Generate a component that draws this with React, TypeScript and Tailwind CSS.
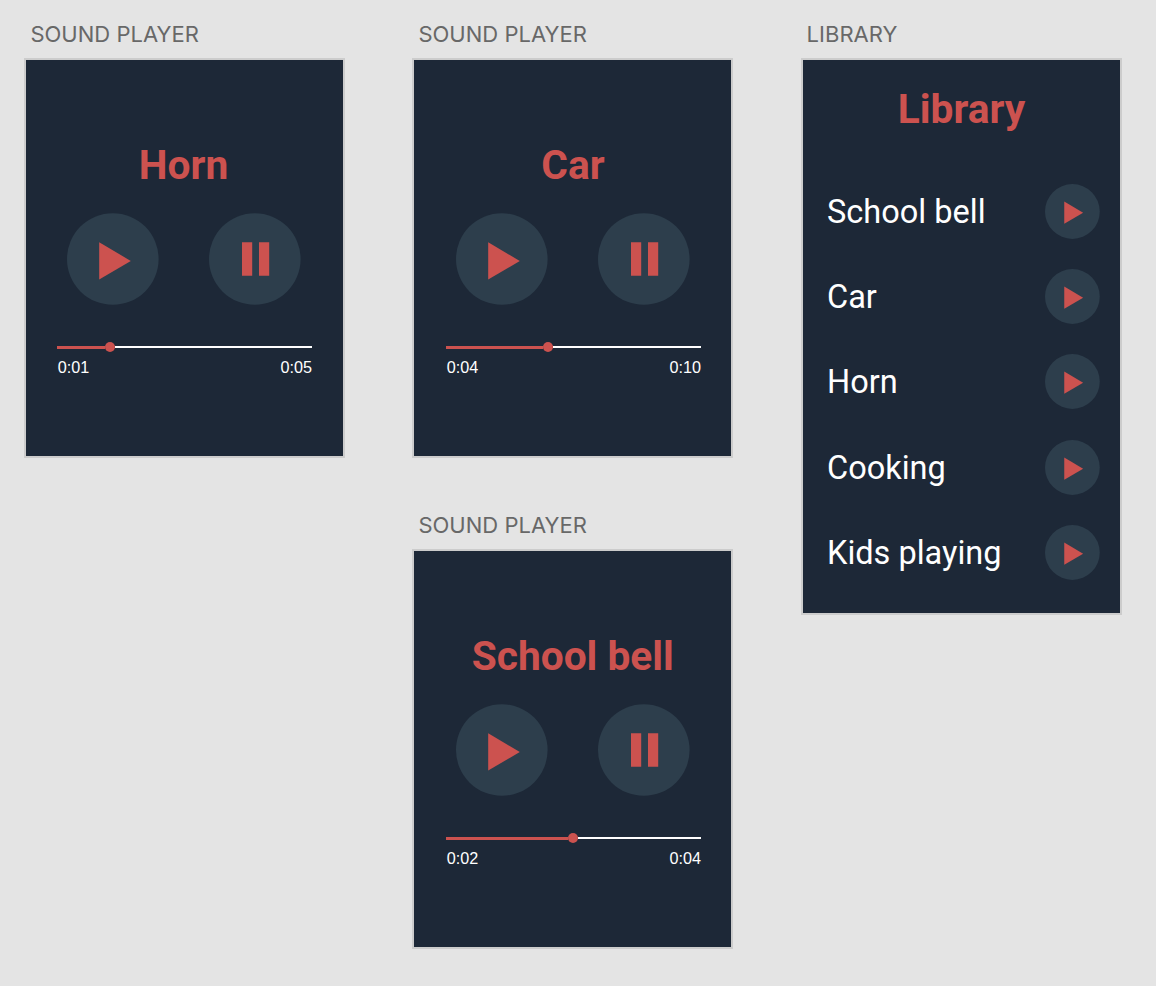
import React from "react";

type PlayerProps = {
  title: string;
  elapsed: string;
  total: string;
  progress: number;
  inset: string;
  titleInset?: string;
};

function PlayIcon({ className }: { className: string }) {
  return (
    <svg viewBox="0 0 92 92" className={className} aria-hidden="true">
      <circle cx="45.8" cy="46" r="45.8" fill="#2d3e4c" />
      <path d="M32.2 29.3 L63.8 47.9 L32.2 66.6 Z" fill="#cc524f" />
    </svg>
  );
}

function PauseIcon({ className }: { className: string }) {
  return (
    <svg viewBox="0 0 92 92" className={className} aria-hidden="true">
      <circle cx="45.8" cy="46" r="45.8" fill="#2d3e4c" />
      <path d="M33 29.2h10.2v33.6h-10.2z M50 29.2h10.2v33.6h-10.2z" fill="#cc524f" />
    </svg>
  );
}

function Label({ children, inset = "pl-[6.4px]" }: { children: React.ReactNode; inset?: string }) {
  return (
    <h2
      className={`h-[38px] font-['Inter',sans-serif] text-[22px] leading-[29px] tracking-[0.02px] text-[#686868] whitespace-nowrap ${inset}`}
    >
      {children}
    </h2>
  );
}

function Player({ title, elapsed, total, progress, inset, titleInset = "" }: PlayerProps) {
  return (
    <section className="w-[321px]">
      <Label>SOUND PLAYER</Label>
      <div className="h-[400px] border-2 border-[#cccccc] bg-[#1d2837] pt-[81px]">
        <h3 className={`text-center text-[40.7px] leading-[48px] font-bold text-[#cc524f] ${titleInset}`}>{title}</h3>
        <div className={inset}>
          <div className="mt-[24px] ml-[10px] flex gap-[50.3px]">
            <button className="size-[92px]" aria-label="Play">
              <PlayIcon className="size-[92px]" />
            </button>
            <button className="size-[92px]" aria-label="Pause">
              <PauseIcon className="size-[92px]" />
            </button>
          </div>
          <div className="mt-[37px] flex h-[10px] w-[254.6px] items-center">
            <div className="h-[3px] bg-[#cc524f]" style={{ width: progress - 5 }} />
            <div className="size-[10px] rounded-full bg-[#cc524f]" />
            <div className="h-[2px] flex-1 bg-white" />
          </div>
          <div className="mt-[5px] flex w-[254.9px] justify-between pl-[0.7px] font-['Liberation_Sans',sans-serif] text-[16.2px] leading-[20px] text-white">
            <span>{elapsed}</span>
            <span>{total}</span>
          </div>
        </div>
      </div>
    </section>
  );
}

const sounds = ["School bell", "Car", "Horn", "Cooking", "Kids playing"];

export default function App() {
  return (
    <main className="flex h-[986px] w-[1156px] items-start overflow-hidden bg-[#e4e4e4] pt-[20px] pl-[24px] font-['Roboto',sans-serif]">
      <Player title="Horn" elapsed="0:01" total="0:05" progress={52.7} inset="pl-[31px]" titleInset="pr-[2px]" />
      <div className="ml-[67px] flex flex-col gap-[53px]">
        <Player title="Car" elapsed="0:04" total="0:10" progress={102.3} inset="pl-[32px]" titleInset="pl-[1px]" />
        <Player title="School bell" elapsed="0:02" total="0:04" progress={126.7} inset="pl-[32px]" titleInset="pl-[0.5px]" />
      </div>
      <section className="ml-[68px] w-[321px]">
        <Label inset="pl-[5.6px]">LIBRARY</Label>
        <div className="h-[557px] border-2 border-[#cccccc] bg-[#1d2837] pt-[25px]">
          <h3 className="text-center text-[40.7px] leading-[48px] font-bold text-[#cc524f]">Library</h3>
          <ul className="mt-[50.7px] flex flex-col gap-[30.3px] pr-[20.5px] pl-[24px]">
            {sounds.map((sound) => (
              <li key={sound} className="flex h-[55px] items-center justify-between text-[32.5px] leading-[40px] text-white">
                <span className="pt-[1.1px]">{sound}</span>
                <button className="size-[55px]" aria-label={"Play " + sound}>
                  <PlayIcon className="size-[55px]" />
                </button>
              </li>
            ))}
          </ul>
        </div>
      </section>
    </main>
  );
}
